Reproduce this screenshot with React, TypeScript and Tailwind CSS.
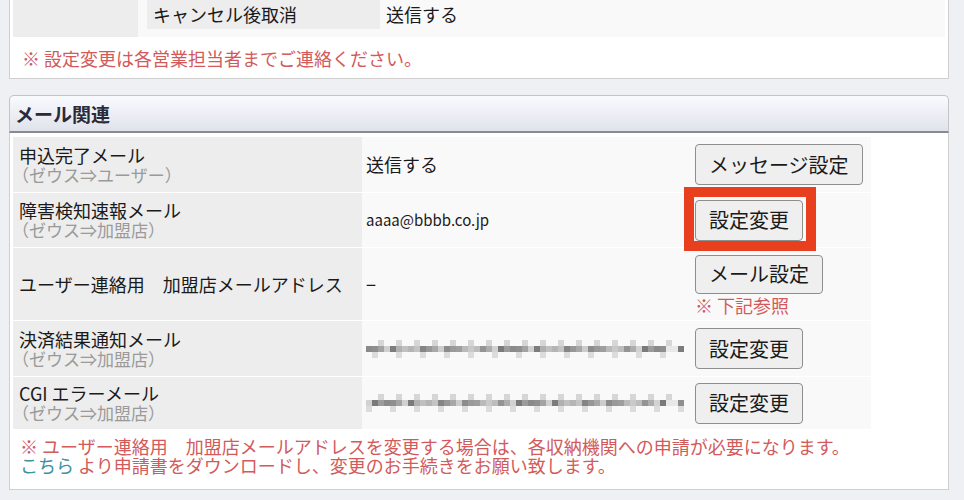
import React from "react";

function Btn({ children }: { children: React.ReactNode }) {
  return (
    <button className="h-[41px] px-[13px] rounded-[4px] border-[1.5px] border-[#8e8e8e] bg-[#efefef] text-[20px] leading-none text-[#1a1a1a] whitespace-nowrap">
      {children}
    </button>
  );
}

// pixelated (mosaic) hidden address
const shades = [
  "#c9c9c9", "#8a8a8a", "#b5b5b5", "#9a9a9a", "#d2d2d2", "#7c7c7c", "#a8a8a8", "#bdbdbd",
  "#8f8f8f", "#c4c4c4", "#9e9e9e", "#7a7a7a", "#b0b0b0", "#cdcdcd", "#949494", "#a3a3a3",
  "#858585", "#bababa", "#9c9c9c", "#c0c0c0", "#8c8c8c", "#adadad", "#d0d0d0", "#979797",
];

function Mosaic({ seed }: { seed: number }) {
  return (
    <div className="flex flex-col w-[322px] blur-[0.6px]">
      <div className="flex h-[6px]">
        {Array.from({ length: 53 }).map((_, i) => (
          <div
            key={i}
            className="w-[6px] shrink-0"
            style={{ background: (i + seed) % 3 === 0 ? "#d6d6d6" : "transparent" }}
          />
        ))}
      </div>
      <div className="flex h-[6px]">
        {Array.from({ length: 53 }).map((_, i) => (
          <div
            key={i}
            className="w-[6px] shrink-0"
            style={{ background: i > 49 && i < 52 ? "#e8e8e8" : shades[(i * 7 + seed) % 24] }}
          />
        ))}
      </div>
      <div className="flex h-[6px]">
        {Array.from({ length: 53 }).map((_, i) => (
          <div
            key={i}
            className="w-[6px] shrink-0"
            style={{ background: (i * 3 + seed) % 4 === 0 ? "#dcdcdc" : "transparent" }}
          />
        ))}
      </div>
    </div>
  );
}

type Row = {
  label: string;
  sub?: string;
  value: React.ReactNode;
  action: React.ReactNode;
  h: string;
};

const rows: Row[] = [
  {
    label: "申込完了メール",
    sub: "（ゼウス⇒ユーザー）",
    value: <span className="text-[18px]">送信する</span>,
    action: <Btn>メッセージ設定</Btn>,
    h: "h-[55px]",
  },
  {
    label: "障害検知速報メール",
    sub: "（ゼウス⇒加盟店）",
    value: <span className="text-[15px]">aaaa@bbbb.co.jp</span>,
    action: (
      <div className="relative">
        <Btn>設定変更</Btn>
        <div className="absolute -left-[11px] -top-[13px] w-[132px] h-[64px] border-[10px] border-[#e8401f]" />
      </div>
    ),
    h: "h-[55px]",
  },
  {
    label: "ユーザー連絡用　加盟店メールアドレス",
    value: <span className="text-[18px]">−</span>,
    action: (
      <div className="flex flex-col items-start">
        <button className="h-[39px] px-[13px] rounded-[4px] border-[1.5px] border-[#8e8e8e] bg-[#efefef] text-[20px] leading-none text-[#1a1a1a]">
          メール設定
        </button>
        <span className="mt-[2px] text-[18px] leading-[18px] text-[#d35a5a]">※ 下記参照</span>
      </div>
    ),
    h: "h-[73px]",
  },
  {
    label: "決済結果通知メール",
    sub: "（ゼウス⇒加盟店）",
    value: <Mosaic seed={1} />,
    action: <Btn>設定変更</Btn>,
    h: "h-[56px]",
  },
  {
    label: "CGI エラーメール",
    sub: "（ゼウス⇒加盟店）",
    value: <Mosaic seed={4} />,
    action: <Btn>設定変更</Btn>,
    h: "h-[53px]",
  },
];

export default function App() {
  return (
    <div className="w-[964px] h-[500px] overflow-hidden bg-[#eff0f4] font-['Noto_Sans_CJK_JP','Noto_Sans',sans-serif] text-[#1a1a1a]">
      {/* top panel (cut off) */}
      <div className="ml-[9px] w-[940px] h-[79px] bg-white border-x border-b border-[#cfcfcf]">
        <div className="ml-[3px] w-[932px] h-[37px] bg-[#f9f9f9] flex">
          <div className="w-[125px] h-[37px] bg-[#ededed]" />
          <div className="ml-[9px] w-[233px] h-[29px] bg-[#ededed] flex items-center pl-[6px] text-[18px]">
            キャンセル後取消
          </div>
          <div className="pl-[6px] h-[29px] flex items-center text-[18px]">送信する</div>
        </div>
        <p className="pl-[12px] pt-[10px] text-[18px] leading-[22px] text-[#d35a5a]">
          ※ 設定変更は各営業担当者までご連絡ください。
        </p>
      </div>

      {/* mail panel */}
      <div className="ml-[9px] mt-[16px] w-[940px]">
        <div className="h-[38px] rounded-t-[5px] border-x border-t border-b-2 border-x-[#c4c4c8] border-t-[#c4c4c8] border-b-[#8a8a8e] bg-gradient-to-b from-[#f9fafe] to-[#e1e3eb] flex items-center pl-[5px]">
          <span className="text-[19px] font-bold text-[#2a2a3a] leading-none">メール関連</span>
        </div>
        <div className="h-[357px] bg-white border-x border-b border-[#d0d0d0] pt-[4px]">
          <div className="ml-[3px] w-[858px]">
            {rows.map((r, i) => (
              <div
                key={i}
                className={`flex ${r.h} ${i > 0 ? "border-t border-dotted border-t-white" : ""}`}
              >
                <div className="w-[349px] bg-[#ededed] flex flex-col justify-center pl-[6px]">
                  <span className="text-[18px] leading-[19px] whitespace-nowrap">{r.label}</span>
                  {r.sub && (
                    <span className="-ml-[7px] text-[17px] leading-[19px] text-[#9a9a9a] whitespace-nowrap">
                      {r.sub}
                    </span>
                  )}
                </div>
                <div className="w-[328px] bg-[#f9f9f9] flex items-center pl-[4px]">{r.value}</div>
                <div className="flex-1 bg-[#f9f9f9] flex items-center pl-[5px]">{r.action}</div>
              </div>
            ))}
          </div>
          <div className="pl-[10px] pt-[8px] text-[18px] leading-[19px] text-[#d35a5a] whitespace-nowrap">
            <p>※ ユーザー連絡用　加盟店メールアドレスを変更する場合は、各収納機関への申請が必要になります。</p>
            <p>
              <a className="text-[#3a93a5]">こちら</a> より申請書をダウンロードし、変更のお手続きをお願い致します。
            </p>
          </div>
        </div>
      </div>
    </div>
  );
}
